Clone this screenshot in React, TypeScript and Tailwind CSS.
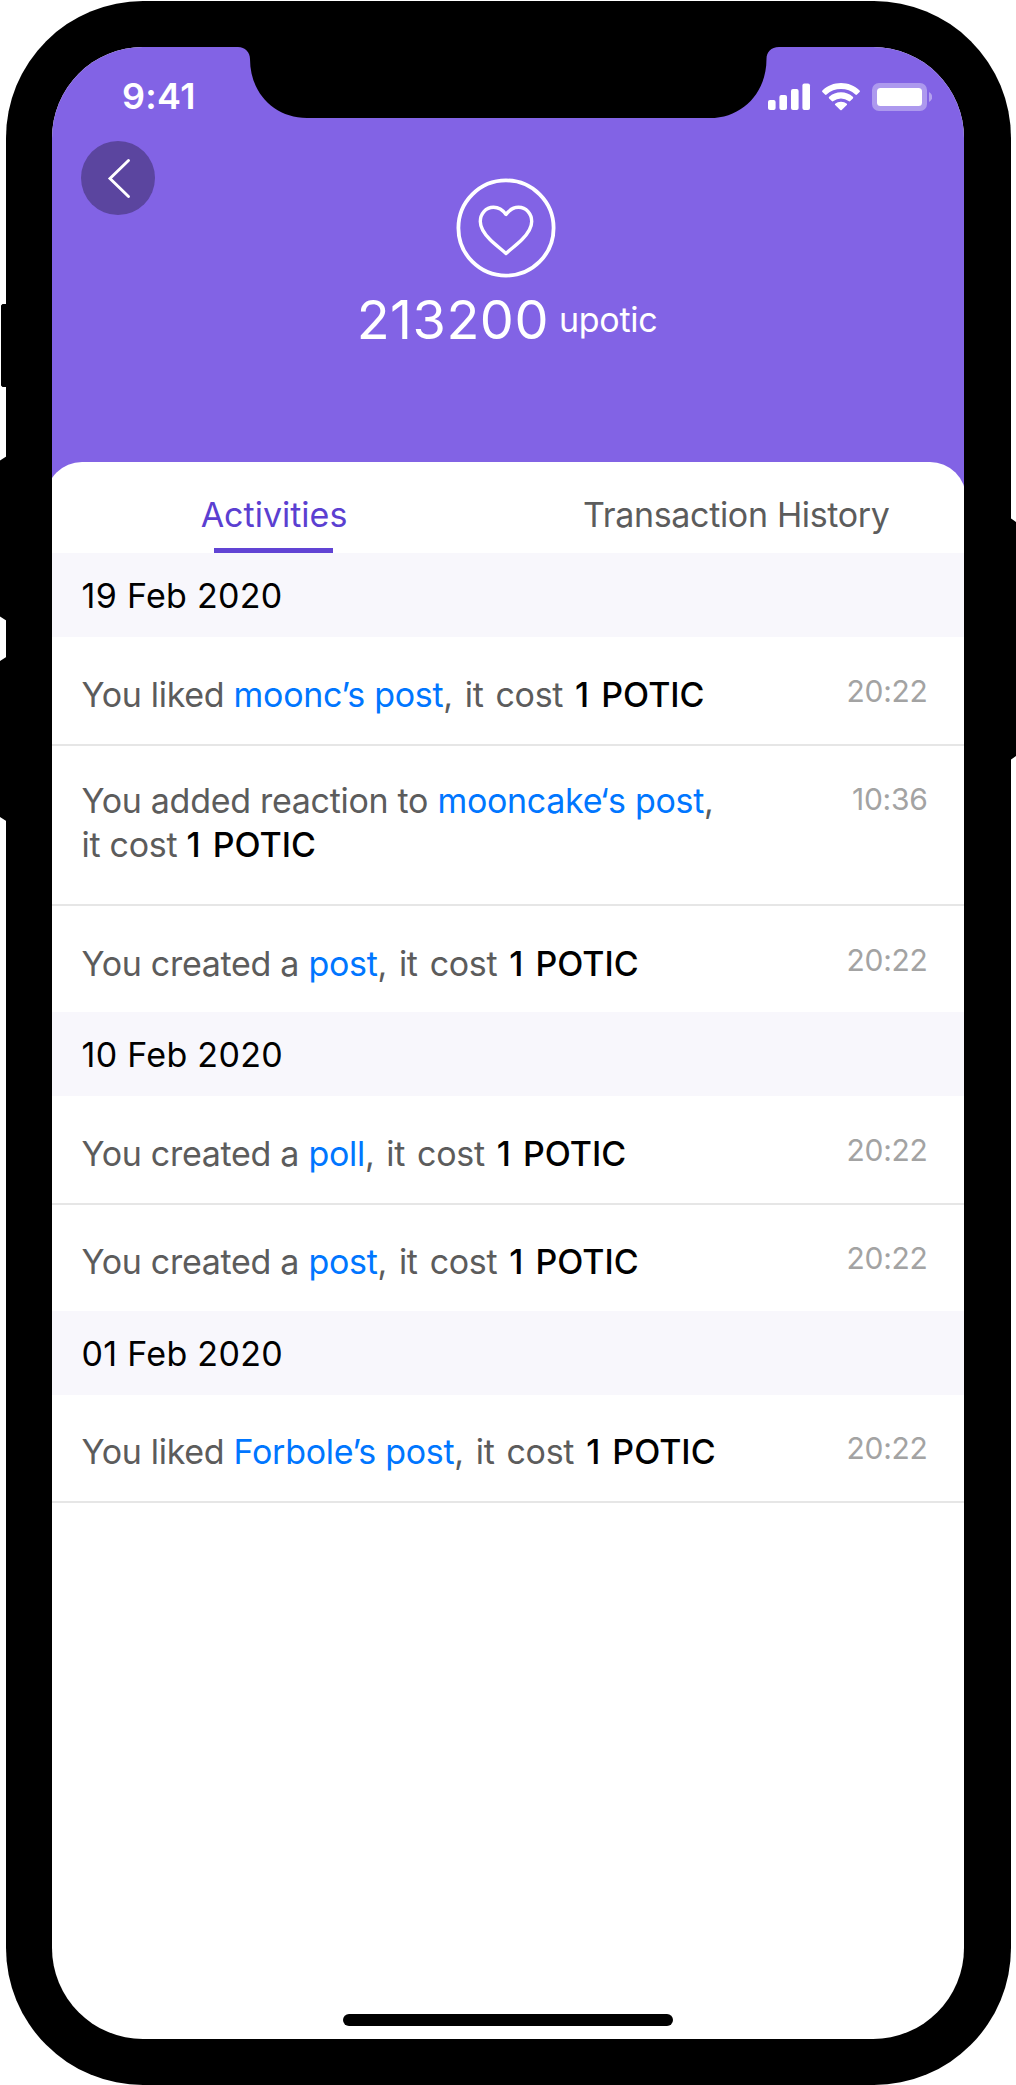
type Activity = {
  lead: string;
  link: string;
  time: string;
  tall?: boolean;
  border?: boolean;
};

type Section = { date: string; items: Activity[] };

const sections: Section[] = [
  {
    date: "19 Feb 2020",
    items: [
      { lead: "You liked ", link: "moonc’s post", time: "20:22", border: true },
      { lead: "You added reaction to ", link: "mooncake‘s post", time: "10:36", tall: true, border: true },
      { lead: "You created a ", link: "post", time: "20:22" },
    ],
  },
  {
    date: "10 Feb 2020",
    items: [
      { lead: "You created a ", link: "poll", time: "20:22", border: true },
      { lead: "You created a ", link: "post", time: "20:22" },
    ],
  },
  {
    date: "01 Feb 2020",
    items: [{ lead: "You liked ", link: "Forbole’s post", time: "20:22", border: true }],
  },
];

function ActivityRow({ item }: { item: Activity }) {
  return (
    <li
      className={`flex justify-between pl-[29.5px] pr-[36.5px] ${
        item.tall ? "h-[160.5px] pt-[33.5px]" : item.border ? "h-[108.5px] pt-[35.5px]" : "h-[106px] pt-[35.5px]"
      } ${item.border ? "border-b-2 border-[#e6e6e6]" : ""}`}
    >
      <p className="whitespace-nowrap text-[34px] leading-[44px] tracking-[-0.3px] text-[#5c5c5c]">
        {item.lead}
        <a className="text-[#0076ff]">{item.link}</a>
        {item.tall ? (
          <>
            ,<br />
            it cost{" "}
          </>
        ) : (
          <span className="[word-spacing:2.7px]">, it cost </span>
        )}
        <strong className="font-medium tracking-[0px] text-black [word-spacing:3px]">1 POTIC</strong>
      </p>
      <time className={`text-[30px] leading-10 tracking-[-0.3px] text-[#a3a3a3] ${item.tall ? "mt-0" : "-mt-[2px]"}`}>
        {item.time}
      </time>
    </li>
  );
}

function StatusIcons() {
  return (
    <svg className="mt-[34px] h-[32px] w-[166px]" viewBox="766 81 166 32" fill="white">
      <rect x="768" y="100" width="7.6" height="10" rx="2" />
      <rect x="779.4" y="95" width="7.6" height="15" rx="2" />
      <rect x="791" y="89" width="7.6" height="21" rx="2" />
      <rect x="802.4" y="83.5" width="7.6" height="26.500" rx="2" />
      <path d="M841 83c7 0 13.600 2.700 18.600 7.400q.8.8 0 1.600l-2.600 2.600q-.8.700-1.600 0a21 21 0 0 0-28.800 0q-.8.700-1.600 0l-2.600-2.600q-.8-.8 0-1.600C827.400 85.700 834 83 841 83Z" />
      <path d="M841 92.200c4.500 0 8.600 1.700 11.800 4.500q.9.900.1 1.700l-2.700 2.600q-.8.700-1.600.1a12 12 0 0 0-15.200 0q-.8.600-1.600-.1l-2.700-2.600q-.8-.8.1-1.700c3.200-2.800 7.300-4.500 11.800-4.500Z" />
      <path d="M841 101.700c2.300 0 4.200.7 5.800 2q.7.700 0 1.400l-5.100 5q-.7.500-1.400 0l-5.100-5q-.7-.7 0-1.400c1.600-1.300 3.500-2 5.800-2Z" />
      <rect x="872" y="83" width="55" height="28" rx="7" opacity=".35" />
      <rect x="877" y="88" width="45" height="18" rx="3.5" />
      <path d="M929 92q3.300 1.700 3.300 5t-3.300 5Z" opacity=".4" />
    </svg>
  );
}

export default function App() {
  return (
    <div className="relative h-[2085px] w-[1016px] overflow-hidden bg-white pl-[6px] pt-px font-['Inter',sans-serif]">
      {/* Hardware buttons */}
      <svg className="absolute left-0 top-0 h-[2085px] w-[1016px]" viewBox="0 0 1016 2085">
        <path d="M7 304H2.5L1 305.500V385.500l1.500 1.500H7ZM7 456l-7 4.500v156l7 4.500ZM7 656.500l-7 4.500v156l7 4.500ZM1009 517l7 5v234l-7 5Z" />
      </svg>

      <div className="relative h-[2084px] w-[1004.5px] rounded-[137px] bg-black px-[46px] pt-[46px]">
        <div className="relative flex h-[1991.5px] w-[912px] flex-col overflow-hidden rounded-[91px] bg-white">
          <header className="h-[445px] shrink-0 bg-[#8263e5] text-white">
            <div className="flex h-[95px] justify-between pl-[70px] pr-[32px]">
              <span className="mt-[27px] text-[36px] font-semibold leading-[44px] tracking-[0.3px]">9:41</span>
              <StatusIcons />
            </div>
            <div className="flex">
              <button
                className="-mt-[1px] ml-[29px] flex size-[74px] items-center justify-center rounded-full bg-[#5b459f]"
                aria-label="Back"
              >
                <svg className="size-[74px]" viewBox="81 141 74 74" fill="none" stroke="white" strokeWidth="2.9" strokeLinecap="round">
                  <path d="M128.500 160.500 110 178.500 128.500 196.500" />
                </svg>
              </button>
            </div>
            <div className="-mt-[37px] flex flex-col items-center pr-[2px]">
              <svg className="mr-[2px] size-[100px]" viewBox="0 0 100 100" fill="none" stroke="white" strokeLinecap="round" strokeLinejoin="round">
                <circle cx="50" cy="50" r="47.6" strokeWidth="3.8" />
                <path
                  strokeWidth="3.4"
                  d="M50 36.500C46 31 42 29.300 37.500 29.300 29.500 29.300 24.300 36 24.300 43.500 24.300 51 29 56.500 34 61.500 39 66.500 45 71 50 75.500 55 71 61 66.500 66 61.500 71 56.500 75.700 51 75.700 43.500 75.700 36 70.500 29.300 62.500 29.300 58 29.300 54 31 50 36.500Z"
                />
              </svg>
              <div className="mt-[9px] flex items-center gap-[10px] leading-[66px]">
                <span className="text-[54px] font-normal tracking-[0.5px]">213200</span>
                <span className="text-[34px] font-normal tracking-[-0.3px]">upotic</span>
              </div>
            </div>
          </header>

          <main className="-ml-[6px] -mt-[30px] flex w-[920px] flex-1 flex-col">
            <nav className="h-[91px] shrink-0 rounded-t-[36px] bg-white pl-[6px] pr-[2px]">
              <div className="grid h-full w-[912px] grid-cols-[444px_1fr] text-[34px] leading-[44px]">
                <a className="relative pt-[31px] text-center text-[#5b3fd1]">
                  Activities
                  <span className="absolute bottom-0 left-[162px] h-[5px] w-[119px] bg-[#6144d4]" />
                </a>
                <a className="pl-[87px] pt-[31px] tracking-[-0.33px] text-[#5c5c5c]">Transaction History</a>
              </div>
            </nav>
            <div className="w-full bg-white pl-[6px]">
              {sections.map((section) => (
                <section key={section.date}>
                  <h2 className="h-[84px] bg-[#f8f7fc] pl-[29.500px] pt-[21px] text-[34px] font-normal leading-[44px] tracking-[0.3px] text-black">
                    {section.date}
                  </h2>
                  <ul className="w-[912px]">
                    {section.items.map((item, index) => (
                      <ActivityRow key={index} item={item} />
                    ))}
                  </ul>
                </section>
              ))}
            </div>
          </main>

          <span className="absolute bottom-[12.5px] left-[291px] h-[12px] w-[330px] rounded-full bg-black" />
        </div>

        {/* Notch */}
        <svg className="absolute left-[232px] top-[45px] h-[73px] w-[541px]" viewBox="238 46 541 73">
          <path d="M238 46V47C245 47 250 52 250 59C250 93 274 118 307 118H710C742 118 766.500 93 766.500 59C766.500 52 771 47 779 47V46Z" />
        </svg>
      </div>
    </div>
  );
}
